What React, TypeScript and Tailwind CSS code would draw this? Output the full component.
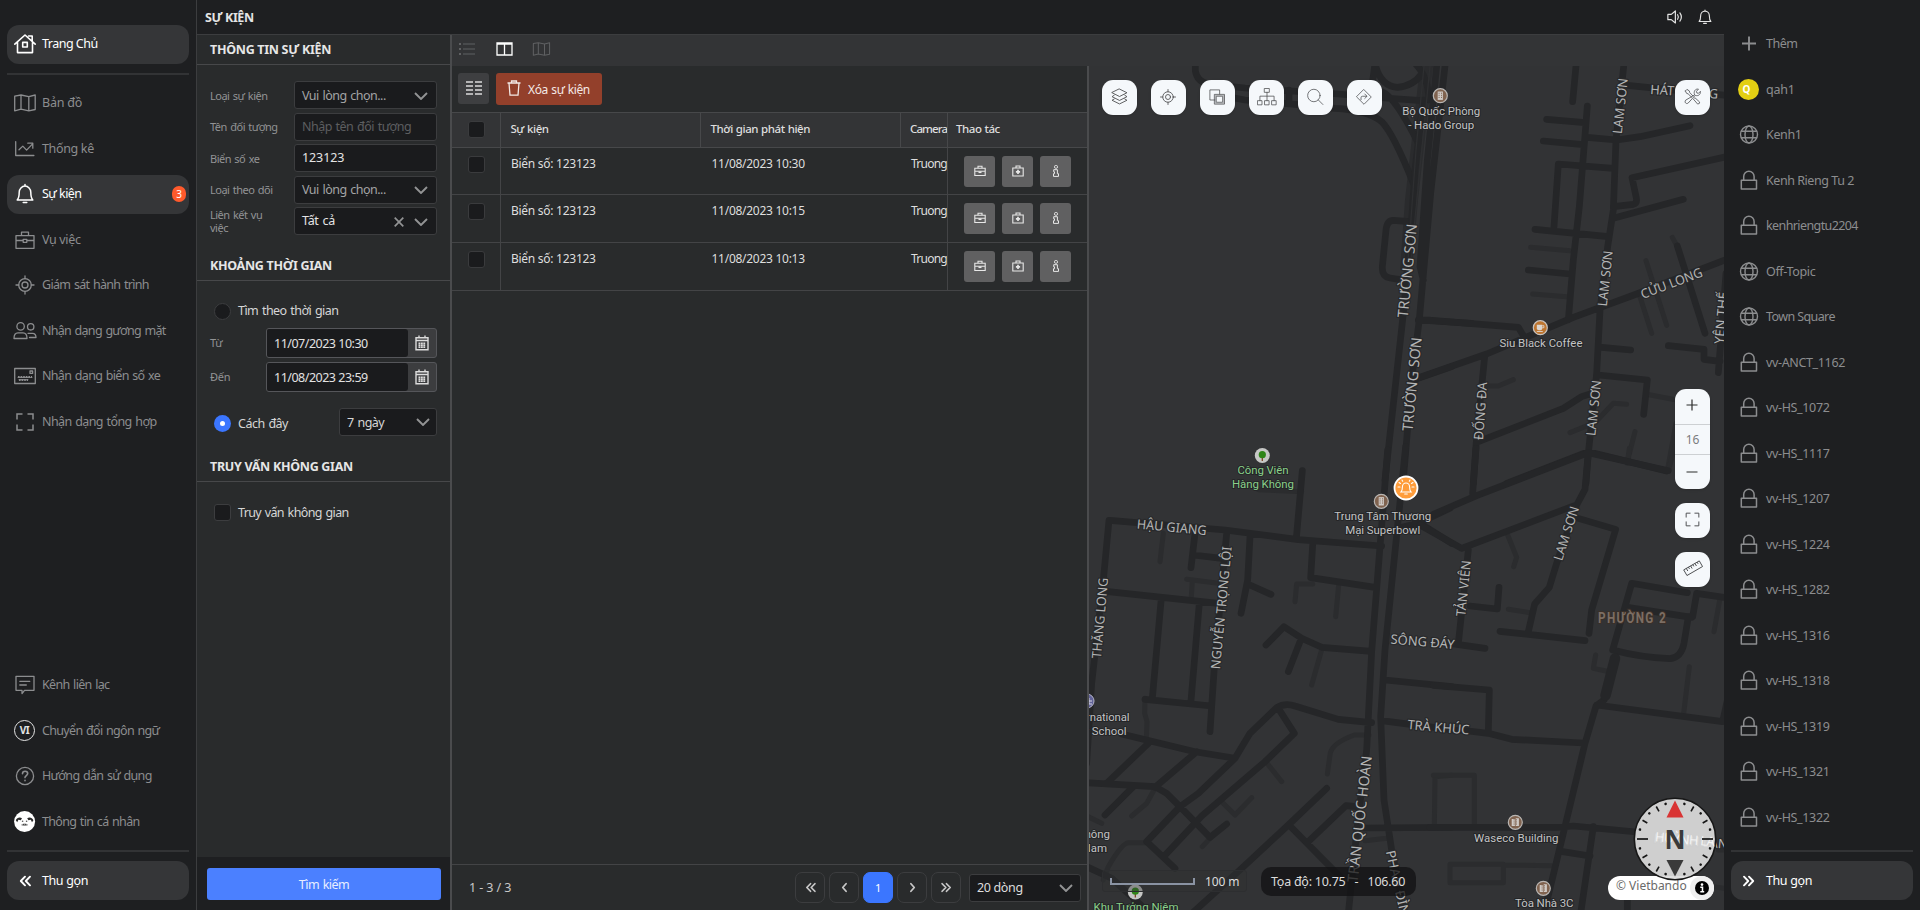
import React from "react";

type IconProps = { className?: string };

function Svg({ className = "", children, sw = 1.3, box = 24 }: { className?: string; children: React.ReactNode; sw?: number; box?: number }) {
  return (
    <svg viewBox={`0 0 ${box} ${box}`} fill="none" stroke="currentColor" strokeWidth={sw} strokeLinejoin="round" strokeLinecap="round" className={className}>
      {children}
    </svg>
  );
}

const S = "size-6 shrink-0";

const HomeIcon = () => (
  <Svg className={S} sw={1.6}>
    <path d="M1.8 12.2 12 3l10.2 9.2M4.5 10v10.6h15V10M15.6 4h3.6v5.4M9.7 10.4h4.6v4.6H9.7z" />
  </Svg>
);
const MapIcon = ({ className = S }: IconProps) => (
  <Svg className={className}>
    <path d="M1.7 5.2 8 4l7.8 1.7 6.4-1.7v14.5l-6.4 1.3L8 18.2l-6.3 1.7zM8 4v14.2M15.8 5.7v14.1" />
  </Svg>
);
const ChartIcon = () => (
  <Svg className={S}>
    <path d="M2.7 4.6v13.9h18.2M6 12.7l3.8-3.6 3.8 4 6-6.2M14.8 6.2h5v5" />
  </Svg>
);
const BellIcon = ({ className = S }: IconProps) => (
  <Svg className={className} sw={1.5}>
    <path d="M4.2 18c1.9-2 2-3.6 2-7.7a5.8 6.2 0 0 1 11.6 0c0 4.1.1 5.7 2 7.7zM10.2 20.5h3.6M12 4V2.6" />
  </Svg>
);
const CaseIcon = ({ className = S }: IconProps) => (
  <Svg className={className}>
    <path d="M3 7.6h18v12.7H3zM8.5 7.4V4.2h7v3.2M3 12.5h7M14 12.5h7M10.2 11.3h3.6v3h-3.6z" />
  </Svg>
);
const TargetIcon = ({ className = S, sw = 1.3 }: IconProps & { sw?: number }) => (
  <Svg className={className} sw={sw}>
    <circle cx="12" cy="12" r="6.3" />
    <circle cx="12" cy="12" r="3" />
    <path d="M12 3v2.7M12 18.3V21M3 12h2.7M18.3 12H21" />
  </Svg>
);
const PeopleIcon = () => (
  <Svg className={S}>
    <circle cx="7.6" cy="7.4" r="3.7" />
    <circle cx="17.7" cy="7.8" r="3.2" />
    <path d="M1 19.5c0-4 1.5-5.7 4-5.7h5c2.5 0 4 1.7 4 5.7zM15 14.3h4.5c2.2 0 3.5 1.5 3.5 4.2h-6.5" />
  </Svg>
);
const PlateIcon = () => (
  <Svg className={S}>
    <path d="M1.7 4.5h20.6v15H1.7zM17 7h2.6v2.4H17z" />
    <path d="M5 13h14M6 16h9" strokeWidth={2} strokeDasharray="1.6 1" strokeLinecap="butt" />
    <path d="M5 13.4h14M6 15.7h9" strokeWidth={1} />
  </Svg>
);
const ScanIcon = ({ className = S, sw = 1.5 }: IconProps & { sw?: number }) => (
  <Svg className={className} sw={sw}>
    <path d="M4 9.5V4h5.5M14.5 4H20v5.5M20 14.5V20h-5.5M9.5 20H4v-5.5" strokeLinecap="butt" strokeLinejoin="miter" />
  </Svg>
);
const CommentIcon = () => (
  <Svg className={S}>
    <path d="M3 3.3h18v14H11.5L9 20.6v-3.3H3zM6.8 8.3h10M6.8 12h6.5" />
  </Svg>
);
const HelpIcon = () => (
  <Svg className={S}>
    <circle cx="12" cy="12" r="8.6" />
    <path d="M9.5 9.8c0-3.4 5.2-3.2 5.2-.2 0 1.9-2.7 2-2.7 4M12 16.2v.5" strokeWidth={1.6} />
  </Svg>
);
const ChevronsLeft = ({ className = S, sw = 1.9 }: IconProps & { sw?: number }) => (
  <Svg className={className} sw={sw}>
    <path d="m12 7.7-4.2 4.3 4.2 4.3M17 7.7 12.8 12l4.2 4.3" />
  </Svg>
);
const ChevronsRight = ({ className = S, sw = 1.9 }: IconProps & { sw?: number }) => (
  <Svg className={className} sw={sw}>
    <path d="m7 7.7 4.2 4.3L7 16.3M12 7.7l4.2 4.3-4.2 4.3" />
  </Svg>
);
const ChevronLeft = ({ className = S }: IconProps) => (
  <Svg className={className} sw={2}><path d="m13.8 7.7-3.8 4.3 3.8 4.3" /></Svg>
);
const ChevronRight = ({ className = S }: IconProps) => (
  <Svg className={className} sw={2}><path d="m10.2 7.7 3.8 4.3-3.8 4.3" /></Svg>
);
const GlobeIcon = () => (
  <Svg className={S} sw={1.4}>
    <circle cx="12" cy="11.5" r="8.5" />
    <ellipse cx="12" cy="11.5" rx="4" ry="8.5" />
    <path d="M4.5 8.2h15M4.5 14.8h15" />
  </Svg>
);
const LockIcon = () => (
  <Svg className={S} sw={1.5}>
    <path d="M4.3 11.3h15.2V20H4.3zM6.7 11V7.5a5.2 5.2 0 0 1 10.4 0V11" />
  </Svg>
);
const PlusIcon = () => (
  <Svg className={S} sw={1.9}><path d="M12 4.500v14M5 11.500h14" strokeLinecap="butt" /></Svg>
);
const Caret = () => (
  <svg viewBox="0 0 14 8" className="h-2 w-3.5 shrink-0" fill="none" stroke="#929394" strokeWidth="1.9"><path d="m1 1 6 6 6-6" /></svg>
);
const CalendarIcon = () => (
  <svg viewBox="0 0 16 16" className="size-4" fill="none" stroke="#dcdcdc" strokeWidth="1.4">
    <path d="M2 2.8h12v12H2zM2 5.5h12M5 .5v3M11 .5v3" />
    <path d="M4.5 8.4h7M4.5 10.4h7M4.5 12.2h7" strokeWidth="1.6" strokeDasharray="1.900 .5" />
  </svg>
);

const AvatarIcon = () => (
  <svg viewBox="0 0 24 24" className={S}>
    <circle cx="11.6" cy="11.6" r="10.5" fill="#fff" />
    <path d="M2.8 10.2C4 7.4 7 6.8 9 8.3l-1.2 1.9-2.4-.4-1.2 2.5zM20.4 10.2C19.2 7.4 16.2 6.8 14.2 8.3l1.2 1.9 2.4-.4 1.2 2.5z" fill="#2a2a2a" />
    <circle cx="9.6" cy="11.3" r=".8" fill="#555" />
    <circle cx="13.6" cy="11.3" r=".8" fill="#555" />
    <path d="M8.1 15c1-2 6-2 7 0-1.500 1.300-5.500 1.300-7 0z" fill="#999" />
    <circle cx="10.6" cy="14.5" r=".6" fill="#333" />
    <circle cx="12.6" cy="14.5" r=".6" fill="#333" />
  </svg>
);
const LangIcon = () => (
  <span className="flex size-6 shrink-0 items-center justify-center pr-px">
    <span className="flex size-[21px] shrink-0 items-center justify-center rounded-full border border-[#e4e4e4] text-[10px] font-bold tracking-[-0.4px] text-[#e4e4e4]">VI</span>
  </span>
);

function NavItem({ icon, label, active = false, badge, tracking = "tracking-[-0.68px] [word-spacing:1px]" }: { icon: React.ReactNode; label: string; active?: boolean; badge?: string; tracking?: string }) {
  return (
    <div
      className={
        "flex h-[39px] shrink-0 items-center gap-[5px] rounded-xl pl-[6px] pr-[3px] " +
        (active ? "bg-[#353638] text-white" : "text-[#8c8d8f]")
      }
    >
      {icon}
      <span className={"whitespace-nowrap pt-px text-[12.5px] " + tracking}>{label}</span>
      {badge && <span className="ml-auto flex h-4 w-3.5 items-center justify-center rounded-full bg-[#ff5a2c] text-[10px]">{badge}</span>}
    </div>
  );
}

function LeftNav() {
  return (
    <aside className="flex w-[196px] shrink-0 flex-col bg-[#1e1f21] px-[7px] pb-[10px] pt-[24.5px]">
      <NavItem icon={<HomeIcon />} label="Trang Chủ" active tracking="tracking-[-0.52px]" />
      <div className="mb-[8.5px] mt-[9.5px] h-0.5 shrink-0 bg-[#323335]" />
      <div className="flex flex-col gap-[6.5px]">
        <NavItem icon={<MapIcon />} label="Bản đồ" tracking="tracking-[-0.2px]" />
        <NavItem icon={<ChartIcon />} label="Thống kê" tracking="tracking-[-0.35px]" />
        <NavItem icon={<BellIcon />} label="Sự kiện" active badge="3" tracking="tracking-[-0.52px]" />
        <NavItem icon={<CaseIcon />} label="Vụ việc" tracking="tracking-[-0.35px]" />
        <NavItem icon={<TargetIcon />} label="Giám sát hành trình" />
        <NavItem icon={<PeopleIcon />} label="Nhận dạng gương mặt" tracking="tracking-[-0.72px] [word-spacing:1px]" />
        <NavItem icon={<PlateIcon />} label="Nhận dạng biển số xe" />
        <NavItem icon={<ScanIcon />} label="Nhận dạng tổng hợp" tracking="tracking-[-0.6px] [word-spacing:1px]" />
      </div>
      <div className="mt-auto flex flex-col gap-[6.5px]">
        <NavItem icon={<CommentIcon />} label="Kênh liên lạc" />
        <NavItem icon={<LangIcon />} label="Chuyển đổi ngôn ngữ" />
        <NavItem icon={<HelpIcon />} label="Hướng dẫn sử dụng" />
        <NavItem icon={<AvatarIcon />} label="Thông tin cá nhân" />
      </div>
      <div className="my-[9px] h-0.5 shrink-0 bg-[#323335]" />
      <NavItem icon={<ChevronsLeft />} label="Thu gọn" active tracking="tracking-[-0.45px] [word-spacing:0.5px]" />
    </aside>
  );
}

const channels: [string, "globe" | "lock", string?][] = [
  ["Kenh1", "globe"],
  ["Kenh Rieng Tu 2", "lock", "tracking-[-0.45px]"],
  ["kenhriengtu2204", "lock", "tracking-[-0.6px]"],
  ["Off-Topic", "globe"],
  ["Town Square", "globe", "tracking-[-0.6px]"],
  ["vv-ANCT_1162", "lock"],
  ["vv-HS_1072", "lock"],
  ["vv-HS_1117", "lock"],
  ["vv-HS_1207", "lock"],
  ["vv-HS_1224", "lock"],
  ["vv-HS_1282", "lock"],
  ["vv-HS_1316", "lock"],
  ["vv-HS_1318", "lock"],
  ["vv-HS_1319", "lock"],
  ["vv-HS_1321", "lock"],
  ["vv-HS_1322", "lock"],
];

function RightNav() {
  return (
    <aside className="flex w-[196px] shrink-0 flex-col bg-[#1e1f21] px-[7px] pb-[10px] pt-[24.5px]">
      <div className="flex flex-col gap-[6.5px]">
        <NavItem icon={<PlusIcon />} label="Thêm" tracking="tracking-[-0.5px]" />
        <NavItem
          icon={
            <span className="flex size-6 shrink-0 items-center justify-center pr-px">
              <span className="flex size-[21px] shrink-0 items-center justify-center rounded-full bg-[#e3cf13] pr-1 text-[10px] font-bold text-white">Q</span>
            </span>
          }
          label="qah1"
          tracking="tracking-[-0.2px]"
        />
        {channels.map(([name, kind, tracking]) => (
          <NavItem key={name} icon={kind === "globe" ? <GlobeIcon /> : <LockIcon />} label={name} tracking={tracking ?? "tracking-[-0.35px]"} />
        ))}
      </div>
      <div className="mb-[9px] mt-auto h-0.5 shrink-0 bg-[#323335]" />
      <NavItem icon={<ChevronsRight />} label="Thu gọn" active tracking="tracking-[-0.45px] [word-spacing:0.5px]" />
    </aside>
  );
}

function SectionTitle({ children, className }: { children: React.ReactNode; className: string }) {
  return (
    <h2 className={"flex items-center border-b border-[#47484a] px-[13px] pt-0.5 text-[12.5px] font-bold tracking-[-0.3px] text-[#e6e6e6] " + className}>
      {children}
    </h2>
  );
}

function Field({ label, children }: { label: string; children: React.ReactNode }) {
  return (
    <div className="flex h-7 items-center">
      <span className="w-[84px] shrink-0 pr-3 text-[11px] leading-[13px] tracking-[-0.5px] text-[#929395] [word-spacing:1px]">{label}</span>
      <div className="flex h-7 flex-1 items-center rounded-[3px] border border-[#3c3d3f] bg-[#1a1b1d] pl-[7px] pr-2 pt-px text-[12.5px] tracking-[-0.52px] [word-spacing:1px]">{children}</div>
    </div>
  );
}

function DateRow({ label, value }: { label: string; value: string }) {
  return (
    <div className="flex h-[30px] items-center">
      <span className="w-14 pt-px text-[11px] tracking-[-0.2px] text-[#929395]">{label}</span>
      <div className="flex h-[30px] flex-1 overflow-hidden rounded-[3px] border border-[#55565a] bg-[#3c3d3f]">
        <span className="flex w-[141px] items-center rounded-r-[3px] bg-[#1a1b1d] pl-[7px] pt-0.5 text-[12.5px] tracking-[-0.5px] text-[#e2e2e2]">{value}</span>
        <span className="flex flex-1 items-center justify-center">
          <CalendarIcon />
        </span>
      </div>
    </div>
  );
}

function FilterPanel() {
  return (
    <section className="flex w-[254px] shrink-0 flex-col border-l border-[#3c3d3f] bg-[#292b2c]">
      <SectionTitle className="h-[30px]">THÔNG TIN SỰ KIỆN</SectionTitle>
      <div className="flex flex-col gap-[3.5px] px-[13px] pt-4">
        <Field label="Loại sự kiện">
          <span className="flex-1 pt-px text-[#a3a4a5]">Vui lòng chọn...</span>
          <Caret />
        </Field>
        <Field label="Tên đối tượng">
          <span className="flex-1 pt-px text-[#5d5e60]">Nhập tên đối tượng</span>
        </Field>
        <Field label="Biển số xe">
          <span className="flex-1 tracking-[-0.1px] text-[#e4e4e4]">123123</span>
        </Field>
        <Field label="Loại theo dõi">
          <span className="flex-1 text-[#a3a4a5]">Vui lòng chọn...</span>
          <Caret />
        </Field>
        <Field label="Liên kết vụ việc">
          <span className="flex-1 tracking-[-0.3px] text-[#e4e4e4]">Tất cả</span>
          <svg viewBox="0 0 10 10" className="mr-[10px] size-2.5" stroke="#929394" strokeWidth="1.7"><path d="m.7.7 8.6 8.6M9.3.7.7 9.3" /></svg>
          <Caret />
        </Field>
      </div>
      <SectionTitle className="mt-4 h-[30px]">KHOẢNG THỜI GIAN</SectionTitle>
      <div className="flex flex-col px-[13px] pt-[22px]">
        <div className="flex h-[17px] items-center gap-[7px] pl-1 text-[12.5px] tracking-[-0.55px] text-[#d6d6d6] [word-spacing:1px]">
          <span className="size-[17px] rounded-full border border-[#3c3d3f] bg-[#1a1b1d]" />
          Tìm theo thời gian
        </div>
        <div className="mt-2 flex flex-col gap-1">
          <DateRow label="Từ" value="11/07/2023 10:30" />
          <DateRow label="Đến" value="11/08/2023 23:59" />
        </div>
        <div className="mt-4 flex h-7 items-center pl-1 text-[12.5px] tracking-[-0.5px] text-[#d6d6d6] [word-spacing:1px]">
          <span className="mr-[7px] mt-0.5 flex size-[17px] items-center justify-center rounded-full bg-[#3b76ff]">
            <span className="size-[5px] rounded-full bg-white" />
          </span>
          <span className="pt-1">Cách đây</span>
          <div className="ml-auto flex h-7 w-[98px] items-center justify-between rounded-[3px] border border-[#3c3d3f] bg-[#1a1b1d] pl-[7px] pr-1.5">
            <span className="pt-0.5">7 ngày</span>
            <Caret />
          </div>
        </div>
      </div>
      <SectionTitle className="mt-4 h-[30px]">TRUY VẤN KHÔNG GIAN</SectionTitle>
      <div className="flex items-center gap-[7px] px-[17px] pt-[21px] text-[12.5px] tracking-[-0.62px] text-[#d6d6d6] [word-spacing:1px]">
        <span className="size-[17px] rounded-[3px] border border-[#3c3d3f] bg-[#1a1b1d]" />
        <span className="pt-px">Truy vấn không gian</span>
      </div>
      <div className="mt-auto flex h-[53px] bg-[#1e1f21] pb-[10px] pl-[10px] pr-[9px] pt-[11px]">
        <button className="flex-1 rounded-[3px] bg-[#4b80ff] pt-0.5 text-[12.5px] tracking-[-0.55px] text-[#e8eeff] [word-spacing:1px]">Tìm kiếm</button>
      </div>
    </section>
  );
}

const BriefcaseSmall = () => (
  <svg viewBox="0 0 12 12" className="size-3" fill="none" stroke="#e8e8e8" strokeWidth="1.1">
    <path d="M.8 3.3h10.4v7.200H.8zM4 3.1V1.300h4v1.800M.8 6.300h10.400" />
    <path d="M4.500 7.300h3" strokeWidth="1.5" />
  </svg>
);
const MedkitSmall = () => (
  <svg viewBox="0 0 12 12" className="size-3" fill="none" stroke="#e8e8e8" strokeWidth="1.1">
    <path d="M.8 3h10.400v8H.8zM4 2.800V1h4v1.800" />
    <path d="M6 4.700v4.200M3.900 6.800h4.200" strokeWidth="1.7" />
  </svg>
);
const InfoSmall = () => (
  <svg viewBox="0 0 12 12" className="size-3" fill="none" stroke="#e8e8e8" strokeWidth="1">
    <rect x="4.500" y=".5" width="3" height="2.800" rx="1.200" />
    <path d="M3.700 4.700h3.700v4h1.100v2.700h-5V8.700h1V6.800h-.8z" />
  </svg>
);

function Check() {
  return <span className="size-[17px] rounded-[3px] border border-[#3a3b3d] bg-[#1a1b1d]" />;
}

function EventRow({ time, height = "h-12" }: { time: string; height?: string }) {
  return (
    <div className={"flex border-b border-[#434446] text-[12px] tracking-[-0.27px] text-[#dedede] " + height}>
      <div className="flex w-[49px] justify-center border-r border-[#434446] pt-2">
        <Check />
      </div>
      <div className="w-[200px] pl-[10px] pt-[7px]">Biển số: 123123</div>
      <div className="w-[200px] pl-[10.5px] pt-[7px]">{time}</div>
      <div className="w-[46px] whitespace-nowrap pl-[10px] pt-[7px] tracking-[-0.75px]">Truong</div>
      <div className="flex flex-1 items-start gap-[7px] border-l border-[#434446] pl-4 pt-[7.5px]">
        {[<BriefcaseSmall key="b" />, <MedkitSmall key="m" />, <InfoSmall key="i" />].map((icon, i) => (
          <button key={i} className="flex h-[31px] w-[31px] items-center justify-center rounded-[3px] bg-[#606061] pb-px">
            {icon}
          </button>
        ))}
      </div>
    </div>
  );
}

function EventTable() {
  const pager = "flex h-[31px] w-[30px] items-center justify-center rounded-[7px] border ";
  return (
    <section className="flex w-[637px] shrink-0 flex-col border-r-2 border-[#4a4b4d] bg-[#292b2c]">
      <div className="flex h-[46px] items-start gap-[7px] pl-[6px] pt-[7px]">
        <button className="flex h-[31px] w-[31px] items-center justify-center rounded-[3px] bg-[#3e3f41] pb-px">
          <svg viewBox="0 0 16 14" className="h-3.5 w-4" stroke="#dcdcdc" strokeWidth="1.4">
            <path d="M0 1h7M9 1h7M0 5h7M9 5h7M0 9h7M9 9h7M0 13h7M9 13h7" />
          </svg>
        </button>
        <button className="flex h-8 w-[106px] items-center rounded-[3px] bg-[#93402b] pl-[11px] text-[12px] tracking-[-0.35px] text-[#f3e9e6] [word-spacing:0.5px]">
          <svg viewBox="0 0 14 16" className="mb-0.5 mr-[7px] h-4 w-3.5" fill="none" stroke="#f3e9e6" strokeWidth="1.3">
            <path d="M.5 3h13M4.500 2.800V1h5v1.800M2 3l1 12.200h8L12 3" />
          </svg>
          <span className="pt-0.5">Xóa sự kiện</span>
        </button>
      </div>
      <div className="flex h-9 border-y border-[#47484a] bg-[#333436] text-[11.5px] font-medium tracking-[-0.45px] text-[#dedede] [word-spacing:0.5px]">
        <div className="flex w-[49px] items-center justify-center border-r border-[#47484a] pb-px">
          <Check />
        </div>
        <div className="flex w-[200px] items-center border-r border-[#47484a] pb-[3px] pl-[9.5px]">Sự kiện</div>
        <div className="flex w-[200px] items-center border-r border-[#47484a] pb-[3px] pl-[9.5px]">Thời gian phát hiện</div>
        <div className="flex w-[46px] items-center pb-[3px] pl-[9px] tracking-[-0.9px]">Camera</div>
        <div className="flex flex-1 items-center border-l border-[#47484a] pb-[3px] pl-2">Thao tác</div>
      </div>
      <EventRow time="11/08/2023 10:30" height="h-[47px]" />
      <EventRow time="11/08/2023 10:15" />
      <EventRow time="11/08/2023 10:13" />
      <div className="mt-auto flex h-[46px] items-center gap-1 border-t border-[#434446] pl-[17px] pr-[6px] text-[12.5px] tracking-[-0.1px] text-[#c8c8c8]">
        <span className="mr-auto pt-0.5">1 - 3 / 3</span>
        <span className={pager + "border-[#3c3d3f]"}><ChevronsLeft className="size-[21px]" sw={2} /></span>
        <span className={pager + "border-[#3c3d3f]"}><ChevronLeft className="size-[21px]" /></span>
        <span className={pager + "border-[#3b76ff] bg-[#3b76ff] pt-px text-[11px] text-white"}>1</span>
        <span className={pager + "border-[#3c3d3f]"}><ChevronRight className="size-[21px]" /></span>
        <span className={pager + "border-[#3c3d3f]"}><ChevronsRight className="size-[21px]" sw={2} /></span>
        <div className="ml-1 flex h-7 w-28 items-center justify-between rounded-[3px] border border-[#3c3d3f] bg-[#1a1b1d] pl-[7px] pr-[7px] tracking-[-0.35px] text-[#dedede]">
          <span className="pt-0.5">20 dòng</span>
          <Caret />
        </div>
      </div>
    </section>
  );
}

/* Road geometry, one sheet per map tile; three units make one pixel. */
type Tile = { x: number; y: number; major: string[]; minor: string[] };
const tiles: Tile[] = [
  {
    x: 1085,
    y: 0,
    major: [
      "M331 190V212Q336 245 370 252L480 264 760 282 900 294 1010 302",
      "M400 285 480 300 600 310 750 325Q850 330 890 365 925 400 985 550",
      "M612 270V312",
      "M870 190 858 280",
      "M870 190Q885 258 937 262 985 258 1010 222",
      "M890 275Q930 290 1000 430",
      "M990 190Q1030 230 1032 300",
      "M975 665 925 661Q906 661 903 690L892 800Q890 830 915 834L965 842",
      "M1000 960 1160 970",
      "M980 1142 1100 1100",
    ],
    minor: [],
  },
  {
    x: 1340,
    y: 60,
    major: [
      "M315 18 272 400 238 778 215 960 190 1260",
      "M290 18 262 300 240 620 250 660",
      "M250 120 225 330 215 480 190 760 135 1260",
      "M238 778 535 802 553 832",
      "M230 955 440 882 700 772 890 702 1160 598",
      "M708 18 698 125",
      "M742 138 718 440 700 600 685 780",
      "M620 178 735 188",
      "M610 243 730 254",
      "M742 232 830 240 900 230 1050 197",
      "M852 10 828 240 820 450 803 560 780 750 770 940 745 1180 738 1270",
      "M862 76 1160 106",
      "M820 325 655 312 642 500",
      "M585 508 805 530",
      "M565 630 690 642",
      "M820 440 880 433Q892 430 889 414L876 353 1160 290",
      "M820 475 1030 418",
      "M1012 558 1095 820",
      "M785 862 872 870",
      "M985 857 1092 868V898L1140 904",
      "M1158 640 1135 938",
      "M775 945 922 960 911 1063",
      "M434 890 410 1130 400 1270",
      "M415 1145 670 1045 725 1010 765 997",
      "M500 1270 745 1175 980 1233",
    ],
    minor: [
      "M572 562 690 572",
      "M578 702 680 710",
      "M997 532 1012 560",
      "M918 602 980 796",
      "M900 710 935 820",
      "M920 1003 1010 1020",
      "M440 978H475L520 959",
      "M690 1118 765 1088 820 1030 860 1033",
      "M885 1115 862 1205",
      "M982 1233 1008 1090",
    ],
  },
  {
    x: 1085,
    y: 450,
    major: [
      "M75 211 420 240 640 269 890 288",
      "M72 211 55 390 20 700 5 940",
      "M330 250 318 353",
      "M425 250 388 650 375 845",
      "M325 315 410 325",
      "M70 425 400 460",
      "M495 260 488 390 468 490",
      "M488 402 558 433",
      "M652 62 634 265",
      "M683 285 677 383 870 412",
      "M228 455 202 745",
      "M343 460 318 752",
      "M180 748 380 768",
      "M543 585 597 530 650 565 710 592 860 604",
      "M645 575 610 665",
      "M908 0 885 290 860 605 845 900 820 1100 790 1390",
      "M962 -10 900 600 887 800 897 1050 920 1200 960 1390",
      "M900 690 1100 710",
      "M890 812 1120 842",
      "M110 852 330 905 450 925 495 850 575 773Q600 758 630 768L760 808 860 818",
      "M580 775 628 850 540 935 350 1098 238 1218",
      "M450 925 340 1030 285 1070 185 1175 270 1255",
      "M190 880 65 1000",
      "M5 998 210 1010 245 1030 285 1070 375 1162 425 1122",
      "M335 905 210 1012",
      "M145 1010 60 1095",
      "M725 1015 610 1125 470 1255 310 1400",
      "M612 1125 770 1285",
      "M670 1175 783 1067 815 1070",
      "M835 1134 1100 1132",
      "M5 1250 80 1285 200 1395",
      "M1095 175 1000 220 950 232",
      "M990 210 1100 280",
    ],
    minor: [
      "M235 250 225 335",
      "M305 388 400 400",
      "M322 390 319 440",
      "M520 119 650 125",
      "M683 402H635L630 455",
      "M762 395 752 500",
      "M180 745 179 790 186 815 184 870",
      "M712 592 680 705",
      "M540 932 590 995",
      "M852 855H808Q738 880 735 915L727 972",
      "M207 1020 185 1060 140 1098",
      "M410 1055 450 1095 500 1043",
      "M375 1165 352 1190",
      "M5 1098 50 1120",
      "M55 1290 70 1250Q110 1180 130 1178L185 1178",
      "M840 1172 905 1165",
      "M1048 1130 1050 980 1100 976",
    ],
  },
  {
    x: 1440,
    y: 450,
    major: [
      "M-20 193 110 137 445 8 685 62",
      "M108 -5 98 130",
      "M445 8 435 118 410 165 350 340 328 412 284 462 265 545",
      "M180 544 435 572",
      "M405 202 527 238 455 480 447 550",
      "M-60 225 65 295 400 168",
      "M85 300 55 580",
      "M30 580 135 595",
      "M90 468 172 477 177 412",
      "M742 428 575 400 518 600Q600 622 690 626 724 622 732 580L745 500H758L770 430 860 443",
      "M562 472 755 502",
      "M492 750 468 768 435 880 370 1150 312 1390",
      "M470 765 848 815 862 750",
      "M-20 706 148 720 145 842",
      "M60 840 145 850 215 868 430 879",
      "M-30 1132H350L400 1128 590 1146",
      "M460 1130 422 1390",
      "M368 1205 450 1218",
      "M562 1345V1390",
    ],
    minor: [
      "M568 -5 562 40",
      "M685 62 705 -10",
      "M205 478 270 488",
      "M203 255 230 322 221 350",
      "M840 445 822 545",
      "M467 615 460 655 498 663",
      "M748 650 731 790",
      "M-20 976H103V1130",
      "M30 1243H190V1298H30zM195 1245 335 1247",
      "M835 1200 855 1200M820 1310 860 1316",
    ],
  },
];

type Street = { t: string; x: number; y: number; a: number; w: number; s?: number };
const streets: Street[] = [
  { t: "TRƯỜNG SƠN", x: 1407.7, y: 270.7, a: -84.3, w: 94, s: 14.5 },
  { t: "TRƯỜNG SƠN", x: 1412.3, y: 384.3, a: -84.3, w: 94, s: 14.5 },
  { t: "LAM SƠN", x: 1620, y: 106, a: -84, w: 56 },
  { t: "LAM SƠN", x: 1605, y: 278.5, a: -84, w: 56 },
  { t: "LAM SƠN", x: 1593.5, y: 408, a: -84, w: 56 },
  { t: "LAM SƠN", x: 1566, y: 533.3, a: -72, w: 56 },
  { t: "CỬU LONG", x: 1671.5, y: 283, a: -20.5, w: 65 },
  { t: "HÁT GIANG", x: 1684.3, y: 91.5, a: 4, w: 68 },
  { t: "YÊN THẾ", x: 1721, y: 318, a: -85, w: 52 },
  { t: "ĐỐNG ĐA", x: 1480.3, y: 411, a: -86, w: 58 },
  { t: "HẬU GIANG", x: 1171.7, y: 527, a: 5.5, w: 70 },
  { t: "THĂNG LONG", x: 1099.7, y: 618, a: -85, w: 81 },
  { t: "NGUYỄN TRỌNG LỘI", x: 1221, y: 607.7, a: -84.5, w: 123 },
  { t: "SÔNG ĐÁY", x: 1422.5, y: 641.5, a: 5, w: 64 },
  { t: "TRÀ KHÚC", x: 1438.5, y: 727, a: 5, w: 62 },
  { t: "TẢN VIÊN", x: 1463.3, y: 588.3, a: -84, w: 56 },
  { t: "TRẦN QUỐC HOÀN", x: 1360, y: 819, a: -83.5, w: 127, s: 14.5 },
  { t: "PHAN ĐÌNH GIÓT", x: 1403, y: 905, a: 77, w: 112 },
  { t: "HUỲNH LAN KHANH", x: 1715, y: 843, a: 5, w: 123 },
];

type Poi = { lines: [string, number][]; x: number; y: number; green?: boolean; end?: boolean };
const pois: Poi[] = [
  { lines: [["Bộ Quốc Phòng", 78], ["- Hado Group", 66]], x: 1441.3, y: 115 },
  { lines: [["Siu Black Coffee", 83]], x: 1541, y: 347 },
  { lines: [["Công Viên", 51], ["Hàng Không", 62]], x: 1263, y: 474, green: true },
  { lines: [["Trung Tâm Thương", 97], ["Mại Superbowl", 75]], x: 1382.7, y: 520 },
  { lines: [["Waseco Building", 84.5]], x: 1516.3, y: 842 },
  { lines: [["Tòa Nhà 3C", 58.5]], x: 1544.3, y: 907 },
  { lines: [["Khu Tưởng Niệm", 85]], x: 1136, y: 910.5, green: true },
  { lines: [["International", 62], ["Primary School", 77]], x: 1129.5, y: 720.5, end: true },
  { lines: [["Hàng Không", 62], ["Việt Nam", 47]], x: 1110, y: 838, end: true },
];

function Building({ x, y, wide = false }: { x: number; y: number; wide?: boolean }) {
  return (
    <g transform={`translate(${x} ${y})`}>
      <circle r="7" fill="#80634f" stroke="#b9b6b3" strokeWidth="1.2" />
      {wide ? (
        <path d="M-3.6-3.2h3.2v7h-3.2zM.4-4h3.2v7.800H.4z" fill="#cfcac6" />
      ) : (
        <path d="M-2.6-4.2h5.2v8.400h-5.200z" fill="#cfcac6" />
      )}
      <path d="M-1.2-3v5.500M1.200-3v5.500" stroke="#80634f" strokeWidth=".9" strokeDasharray="1.100 1" />
    </g>
  );
}

function Tree({ x, y }: { x: number; y: number }) {
  return (
    <g transform={`translate(${x} ${y})`}>
      <circle r="7.5" fill="#c6c7c5" />
      <path d="M0 0v5.500" stroke="#7a3b1a" strokeWidth="1.2" />
      <circle cy="-.8" r="3.6" fill="#2f8518" />
    </g>
  );
}

function MapDrawing() {
  return (
    <svg viewBox="1089 66 635 844" className="block h-[844px] w-[635px]">
      <rect x="1089" y="66" width="635" height="844" fill="#323335" />
      <path d="M1433 66 1418 200 1412 270 1400 270 1405 200 1420 66z" fill="#2a2b2d" />
      {tiles.map((t, i) => (
        <g key={i} transform={`translate(${t.x} ${t.y}) scale(.33333)`} fill="none" strokeLinecap="round" strokeLinejoin="round">
          <path d={t.minor.join("")} stroke="#2b2c2e" strokeWidth="15" />
        </g>
      ))}
      {tiles.map((t, i) => (
        <g key={i} transform={`translate(${t.x} ${t.y}) scale(.33333)`} fill="none" strokeLinecap="round" strokeLinejoin="round">
          <path d={t.major.join("")} stroke="#252628" strokeWidth="20" />
        </g>
      ))}
      <path d="M1615 658.5 1605.5 695.5" stroke="#252628" strokeWidth="10.5" strokeLinecap="round" />
      <path d="M1430 66 1408 290M1424 66 1416 150 1408 260" stroke="#2e2f31" strokeWidth="1.3" fill="none" />

      <g fontFamily="'Noto Sans','Open Sans',sans-serif" fill="#b4b5b5" stroke="#28292b" strokeWidth="2.5" strokeLinejoin="round" style={{ paintOrder: "stroke" }} textAnchor="middle">
        {streets.map((s, i) => (
          <text key={i} transform={`translate(${s.x} ${s.y}) rotate(${s.a})`} y="4.8" fontSize={s.s ?? 13} textLength={s.w} lengthAdjust="spacingAndGlyphs">
            {s.t}
          </text>
        ))}
      </g>
      <text x="1632.5" y="623" textAnchor="middle" fontFamily="Roboto,sans-serif" fontWeight="700" fontSize="14" letterSpacing="1.6" fill="#7c6e64" stroke="#3a2f28" strokeWidth="2" style={{ paintOrder: "stroke" }} textLength="69" lengthAdjust="spacingAndGlyphs">
        PHƯỜNG 2
      </text>

      <g fontFamily="Roboto,sans-serif" fontSize="11.5" stroke="#242527" strokeWidth="2" strokeLinejoin="round" style={{ paintOrder: "stroke" }}>
        {pois.map((p, i) => (
          <g key={i} textAnchor={p.end ? "end" : "middle"} fill={p.green ? "#8ad08a" : "#c2c3c4"}>
            {p.lines.map(([t, w], j) => (
              <text key={j} x={p.x - (p.end ? j * 3 : 0)} y={p.y + j * 14} textLength={w}>
                {t}
              </text>
            ))}
          </g>
        ))}
      </g>

      <Building x={1440.3} y={95.7} />
      <Building x={1381.3} y={501.3} />
      <Building x={1515.3} y={822.3} wide />
      <Building x={1543.3} y={888.3} wide />
      <Tree x={1262.3} y={455.5} />
      <Tree x={1135.3} y={892} />
      <g transform="translate(1540.3 327.7)">
        <circle r="7" fill="#bd7530" stroke="#c9c4bf" strokeWidth="1.2" />
        <path d="M-3.5-3h5.500v3.500a2 2 0 0 1-2 2h-1.500a2 2 0 0 1-2-2z" fill="#dcd6d0" />
        <path d="M2-2h1.600v2H2M-3.500 3.800h6" stroke="#dcd6d0" strokeWidth=".9" fill="none" />
      </g>
      <g transform="translate(1087 701)">
        <circle r="7" fill="#62639a" stroke="#b5b5c8" strokeWidth="1" />
        <path d="M2-3v6M-1 0h6M1 3h4" stroke="#d5d5e0" strokeWidth="1" />
      </g>
      <g transform="translate(1406 488)">
        <circle r="11.5" fill="#ff9d3b" stroke="#fff" strokeWidth="1.8" />
        <path d="M-5 4C-3.600 2.500-3.600 1-3.600-1a3.600 4 0 0 1 7.200 0c0 2 0 3.500 1.400 5zM-1.300 6h2.600M-5.500-4.500l-1.500-1M5.500-4.500l1.500-1M-6-1h-2M6-1h2M-3.300-6.800l-.7-1.200M3.300-6.800l.7-1.200" stroke="#fff" strokeWidth="1.1" fill="none" strokeLinecap="round" />
      </g>
    </svg>
  );
}

const ticks = Array.from({ length: 24 }, (_, i) => i * 15);

function Compass() {
  return (
    <svg viewBox="-42 -42 84 84" className="absolute left-[543.5px] top-[731px] size-[84px]">
      <circle r="40.7" fill="#dcdcdc" fillOpacity=".92" stroke="#171717" strokeWidth="1.6" />
      <g transform="rotate(5)" opacity=".75">
        <text x="-20" y="4" fontSize="13" fontFamily="'Noto Sans',sans-serif" fill="#fff" textLength="60">HUỲNH LA</text>
      </g>
      {ticks.map((a) =>
        a % 180 === 0 ? null : a % 90 === 0 ? (
          <path key={a} d="M0-38V-27" stroke="#151515" strokeWidth="1.7" transform={`rotate(${a})`} />
        ) : a % 30 === 0 ? (
          <path key={a} d="M0-37.5V-32" stroke="#151515" strokeWidth="1.6" transform={`rotate(${a})`} />
        ) : (
          <circle key={a} cy="-36.3" r="1.3" fill="#151515" transform={`rotate(${a})`} />
        )
      )}
      <path d="M0-38.5 8.500-21.500H-8.500z" fill="#d93434" />
      <path d="M0 37.5 8.500 21H-8.500z" fill="#3a3a3a" />
      <text y="10" textAnchor="middle" fontFamily="'Noto Sans','Open Sans',sans-serif" fontWeight="700" fontSize="27" fill="#3a3a3a" textLength="21" lengthAdjust="spacingAndGlyphs">
        N
      </text>
    </svg>
  );
}

const mapBtn = "flex size-[35px] items-center justify-center rounded-[11px] bg-[#f5f8fb] text-[#4a4b4d] shadow";

function MapPanel() {
  return (
    <section className="relative w-[635px] shrink-0 overflow-hidden">
      <MapDrawing />
      <div className="absolute left-[13px] top-[14px] flex gap-[14px]">
        <span className={mapBtn}>
          <Svg className="mb-[3px] mr-px size-[21px]" sw={1}><path d="m12 3.500 8.500 4.200L12 12 3.500 7.700zM6 10.500l-2.500 1.700L12 16.500l8.500-4.300-2.500-1.700M6 14.800l-2.500 1.500L12 20.500l8.500-4.200-2.500-1.500" /></Svg>
        </span>
        <span className={mapBtn}><TargetIcon className="mb-0.5 mr-px size-5" sw={1} /></span>
        <span className={mapBtn}>
          <Svg className="mb-0.5 mr-px size-[18px]" sw={1}><path d="M9 16H2.500V2.500h13V8M9 8.500h13V21.500H9zM11.500 11h8v8h-8z" /><path d="M10.300 9.800h10.500v10.500H10.300z" strokeWidth={0.5} /></Svg>
        </span>
        <span className={mapBtn}>
          <Svg className="mb-px size-5" sw={0.9}><path d="M9.200 1.800h5.600v4.600H9.200zM12 6.400v10M3.500 16.400V11h17v5.400M1 16.400h5v5H1zM9.500 16.400h5v5h-5zM18 16.400h5v5h-5z" /></Svg>
        </span>
        <span className={mapBtn}>
          <Svg className="mb-0.5 mr-px size-[18px]" sw={1}><circle cx="10.5" cy="10" r="8.3" /><path d="m16.500 16 6 6" /></Svg>
        </span>
        <span className={mapBtn}>
          <Svg className="mb-0.5 mr-px size-[18px]" sw={1}><path d="M12 2.300 21.700 12 12 21.700 2.300 12zM8 15.500V13q0-2 2-2h5.500M13 8l3 3-3 3" /></Svg>
        </span>
      </div>
      <span className={mapBtn + " absolute left-[586px] top-[14px]"}>
        <Svg className="mb-0.5 size-[19px]" sw={1}>
          <path d="m3 5 2-2 3 2 .5 2 4 4.300M3 5l1.500 3 2 .7L11 13M13.500 15l1.500-1.500 6 5.500q.7 2-2 2.500zM14.500 9.500c-1.500-4 1-7.500 5-6.800L17 5.500l.5 2 2 .5L22 5.500c.5 4-3 6.500-6.500 5L6.500 20.300c-2.500 1.700-5-.8-3.500-3.200z" />
        </Svg>
      </span>
      <div className="absolute left-[586px] top-[323px] flex h-[100px] w-[35px] flex-col overflow-hidden rounded-[11px] bg-[#f5f8fb] text-[#3c3d3f] shadow">
        <span className="flex h-[35px] items-center justify-center pb-[3px] pr-px"><svg viewBox="0 0 12 12" className="size-3" stroke="#2c2c2c" strokeWidth="1.2"><path d="M6 .5v11M.5 6h11" /></svg></span>
        <span className="flex h-[31px] items-center justify-center border-y border-[#cdd0d3] text-[12px] text-[#7b7c7e]">16</span>
        <span className="flex flex-1 items-center justify-center pr-px"><svg viewBox="0 0 12 12" className="size-3" stroke="#2c2c2c" strokeWidth="1.2"><path d="M.5 6h11" /></svg></span>
      </div>
      <span className={mapBtn + " absolute left-[586px] top-[437px]"}><ScanIcon className="mb-0.5 size-[19px]" sw={1.2} /></span>
      <span className={mapBtn + " absolute left-[586px] top-[486px]"}>
        <svg viewBox="0 0 20 20" className="mb-1 size-5" fill="none" stroke="#3c3d3f" strokeWidth=".8">
          <path d="M1 7h18v6.500H1zM4 7v3M6.500 7v2M9 7v3M11.500 7v2M14 7v3M16.500 7v2" transform="rotate(-30 10 10)" />
        </svg>
      </span>

      <div className="absolute left-[13px] top-[804px] flex h-[22px] w-[145px] items-center rounded-[3px] border border-[#2d2e30] bg-[#303133]/40 pl-[7px] text-[12px] tracking-[-0.1px] text-[#dcdcdc]">
        <span className="mr-[10px] h-[7px] w-[85px] border-2 border-t-0 border-[#8a93a3]" />
        <span className="pt-px">100 m</span>
      </div>
      <div className="absolute left-[172px] top-[801px] flex h-[29px] w-[155px] items-center whitespace-pre rounded-[10px] bg-[#111213]/75 pl-[10px] pt-px text-[12.5px] tracking-[-0.25px] text-[#dcdcdc]">
        Tọa độ: 10.75<span className="w-[22px] text-center">-</span>106.60
      </div>
      <div className="absolute left-[519px] top-[810px] flex h-6 w-[106px] items-center justify-between rounded-xl bg-white pl-2 text-[12px] text-[#6a6a6a]">
        <span className="pb-1">© Vietbando</span>
        <span className="flex size-6 items-center justify-center rounded-full bg-[#efefef]">
          <svg viewBox="0 0 14 14" className="size-3.5"><circle cx="7" cy="7" r="7" fill="#000" /><circle cx="7" cy="3.6" r="1.3" fill="#fff" /><path d="M5.3 6.300H7.500v4.200M5.300 10.700h3.900" stroke="#fff" strokeWidth="1.5" fill="none" /></svg>
        </span>
      </div>
      <Compass />
    </section>
  );
}

function Workspace() {
  return (
    <div className="flex w-[1274px] shrink-0 flex-col border-t border-[#3c3d3f]">
      <div className="flex h-[31px] shrink-0 items-center border-l-2 border-[#4a4b4d] bg-[#333436] pb-[3px] pl-[7px] text-[#5f6062]">
        <svg viewBox="0 0 17 14" className="mr-[20px] h-3.5 w-[17px]" stroke="currentColor" strokeWidth="1.1"><path d="M4 2h12M4 7h12M4 12h12" /><path d="M0 2h2M0 7h2M0 12h2" strokeWidth="2" /></svg>
        <svg viewBox="0 0 17 14" className="mr-[19px] h-3.5 w-[17px]" fill="none" stroke="#fff" strokeWidth="1.3"><path d="M1 1h15v12H1zM8.500 1v12M1 2h15" /></svg>
        <MapIcon className="h-5 w-[19px]" />
      </div>
      <div className="flex flex-1">
        <div className="flex border-l-2 border-[#4a4b4d]"><EventTable /></div>
        <MapPanel />
      </div>
    </div>
  );
}

export default function App() {
  return (
    <div className="flex h-[910px] w-[1920px] overflow-hidden bg-[#1e1f21] font-['Noto_Sans','Open_Sans',sans-serif]">
      <LeftNav />
      <div className="flex w-[1528px] shrink-0 flex-col">
        <header className="flex h-[34px] shrink-0 items-center border-l border-[#3c3d3f] bg-[#1e1f21] pl-2 pr-[10px] text-[#e4e4e4]">
          <h1 className="mr-auto pt-0.5 text-[12.5px] font-bold tracking-[-0.4px]">SỰ KIỆN</h1>
          <Svg className="mr-[12px] size-[18px]" sw={1.6}>
            <path d="M2.500 8.500H7l5.500-4.500v16L7 15.500H2.500zM15.500 9q2 3 0 6M18.500 6.500q4 5.500 0 11" />
          </Svg>
          <BellIcon className="size-[18px]" />
        </header>
        <div className="flex flex-1">
          <div className="flex border-t border-[#3c3d3f]"><FilterPanel /></div>
          <Workspace />
        </div>
      </div>
      <RightNav />
    </div>
  );
}
